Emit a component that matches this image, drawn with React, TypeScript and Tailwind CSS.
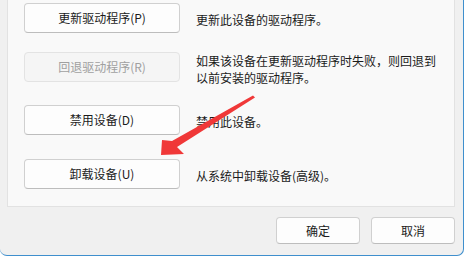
import React from 'react';

const font = { fontFamily: '"Noto Sans CJK SC", "Noto Sans", sans-serif' };

function Btn({ label, disabled }: { label: string; disabled?: boolean }) {
  return (
    <div
      className={
        'w-[156px] h-[30px] shrink-0 rounded-[4px] border flex items-center justify-center text-[12px] ' +
        (disabled
          ? 'bg-[#f5f5f5] border-[#e3e3e3] text-[#a0a0a0]'
          : 'bg-[#fdfdfd] border-[#d0d0d0] border-b-[#bdbdbd] text-[#1b1b1b]')
      }
    >
      {label}
    </div>
  );
}

const rows = [
  { label: '更新驱动程序(P)', desc: ['更新此设备的驱动程序。'], mt: 'mt-[3px]' },
  {
    label: '回退驱动程序(R)',
    desc: ['如果该设备在更新驱动程序时失败，则回退到', '以前安装的驱动程序。'],
    mt: 'mt-[19px]',
    disabled: true,
  },
  { label: '禁用设备(D)', desc: ['禁用此设备。'], mt: 'mt-[23px]' },
  { label: '卸载设备(U)', desc: ['从系统中卸载设备(高级)。'], mt: 'mt-[24px]' },
];

export default function App() {
  return (
    <div className="w-[467px] h-[258px] bg-white" style={font}>
      <div className="relative w-[464px] h-[256px] bg-[#f0f0f0] border-r border-b border-[#3f8fcd] rounded-bl-[7px] rounded-br-[7px]">
        {/* Panel */}
        <div className="ml-[7px] w-[448px] h-[207px] bg-[#f9f9f9] border-l border-r border-b border-[#e2e2e2] pl-[16px] flex flex-col">
          {rows.map((r) => (
            <div key={r.label} className={'flex items-center gap-4 h-[30px] ' + r.mt}>
              <Btn label={r.label} disabled={r.disabled} />
              <div className="pt-[3px] text-[12px] leading-[17px] text-[#1b1b1b]">
                {r.desc.map((d) => (
                  <div key={d}>{d}</div>
                ))}
              </div>
            </div>
          ))}
        </div>

        {/* Footer buttons */}
        <div className="flex justify-end gap-[11px] mt-[10px] pr-[8px]">
          <div className="w-[84px] h-[27px] rounded-[4px] border border-[#d0d0d0] border-b-[#bdbdbd] bg-[#fdfdfd] flex items-center justify-center text-[12px] text-[#1b1b1b]">
            确定
          </div>
          <div className="w-[84px] h-[27px] rounded-[4px] border border-[#d0d0d0] border-b-[#bdbdbd] bg-[#fdfdfd] flex items-center justify-center text-[12px] text-[#1b1b1b]">
            取消
          </div>
        </div>

        {/* Red annotation arrow */}
        <svg className="absolute left-0 top-0 pointer-events-none" width="467" height="258">
          <polygon
            fill="#f03838"
            points="161,155 162,140 172,141 253,95.5 255,97.5 177,147 184,154"
          />
        </svg>
      </div>
    </div>
  );
}
